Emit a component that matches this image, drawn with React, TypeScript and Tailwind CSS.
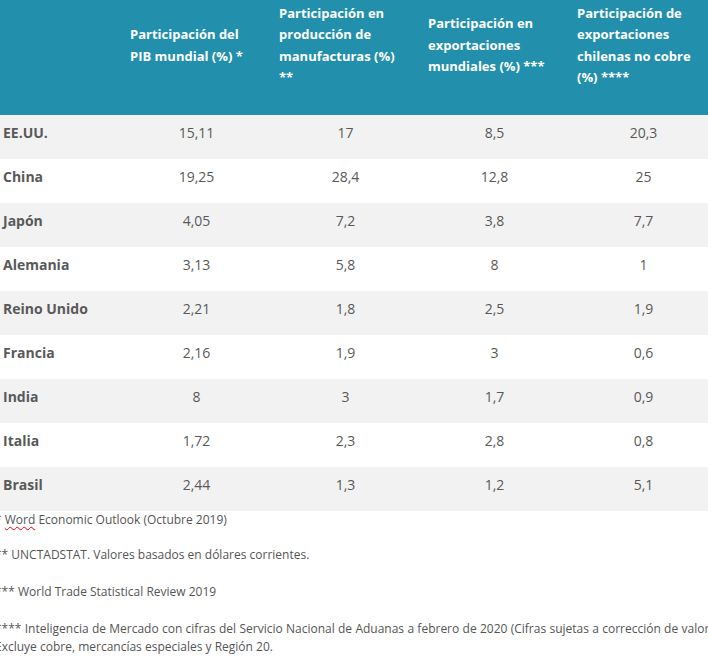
import React from "react";

const headers = [
  "Participación del PIB mundial (%) *",
  "Participación en producción de manufacturas (%) **",
  "Participación en exportaciones mundiales (%) ***",
  "Participación de exportaciones chilenas no cobre (%) ****",
];

const rows: [string, string, string, string, string][] = [
  ["EE.UU.", "15,11", "17", "8,5", "20,3"],
  ["China", "19,25", "28,4", "12,8", "25"],
  ["Japón", "4,05", "7,2", "3,8", "7,7"],
  ["Alemania", "3,13", "5,8", "8", "1"],
  ["Reino Unido", "2,21", "1,8", "2,5", "1,9"],
  ["Francia", "2,16", "1,9", "3", "0,6"],
  ["India", "8", "3", "1,7", "0,9"],
  ["Italia", "1,72", "2,3", "2,8", "0,8"],
  ["Brasil", "2,44", "1,3", "1,2", "5,1"],
];

export default function App() {
  return (
    <div
      className="w-[708px] h-[656px] overflow-hidden bg-white"
      style={{ fontFamily: '"Open Sans", "Noto Sans", sans-serif' }}
    >
      <div className="w-[718px]">
        <div className="grid grid-cols-[122px_149px_149px_149px_149px] h-[115px] bg-[#2290ad] items-center pb-[24px]">
          <div />
          {headers.map((h) => (
            <div
              key={h}
              className="pl-[8px] pr-[16px] text-[13px] leading-[21.5px] font-bold text-white"
            >
              {h}
            </div>
          ))}
        </div>
        {rows.map((r, i) => (
          <div
            key={r[0]}
            className={`grid grid-cols-[122px_149px_149px_149px_149px] h-[44px] items-center pb-[8px] text-[14px] leading-[20px] text-[#595959] ${
              i % 2 === 0 ? "bg-[#f2f2f2]" : "bg-white"
            }`}
          >
            <div className="pl-[3px] font-bold">{r[0]}</div>
            <div className="text-center">{r[1]}</div>
            <div className="text-center">{r[2]}</div>
            <div className="text-center">{r[3]}</div>
            <div className="text-center">{r[4]}</div>
          </div>
        ))}
      </div>
      <div className="-ml-[5px] w-[721px] text-[12px] leading-[18px] text-[#555555]">
        <p>
          *{" "}
          <span className="underline decoration-wavy decoration-red-600 decoration-1 underline-offset-2">
            Word
          </span>{" "}
          Economic Outlook (Octubre 2019)
        </p>
        <p className="mt-[17px]">** UNCTADSTAT. Valores basados en dólares corrientes.</p>
        <p className="mt-[19px]">*** World Trade Statistical Review 2019</p>
        <div className="mt-[19px]">
          <div className="text-justify [text-align-last:justify]">
            **** Inteligencia de Mercado con cifras del Servicio Nacional de Aduanas a febrero de 2020 (Cifras sujetas a corrección de valor).
          </div>
          <div>Excluye cobre, mercancías especiales y Región 20.</div>
        </div>
      </div>
    </div>
  );
}
